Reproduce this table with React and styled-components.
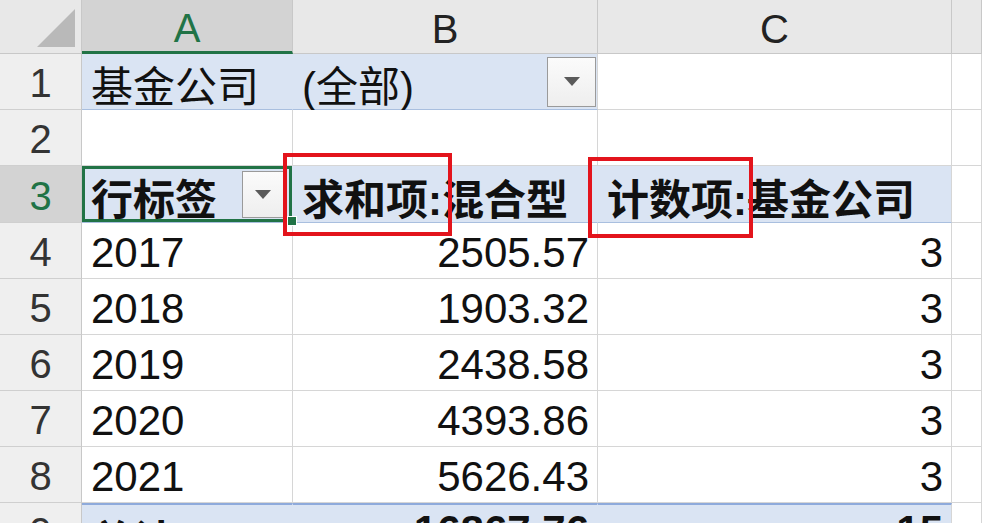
import React from "react";
import styled, { createGlobalStyle, css } from "styled-components";

const Global = createGlobalStyle`
  html, body { margin: 0; padding: 0; background: #fff; overflow: hidden; }
  body { width: 982px; height: 523px; }
`;

const FONT = `"Liberation Sans", "Noto Sans CJK SC", sans-serif`;
const BLUE = "#dae4f3";
const GRID = "#d6d6d6";
const GREEN = "#217346";

const Sheet = styled.div`
  position: relative;
  display: grid;
  grid-template-columns: 82px 211px 305px 354px 30px;
  grid-template-rows: 54px 56px 56px 57px 56px 56px 56px 56px 56px 56px;
  width: 982px;
  height: 523px;
  overflow: hidden;
  font-family: ${FONT};
`;

const Corner = styled.div`
  background: #e8e8e8;
  border-right: 1px solid #c8c8c8;
  border-bottom: 1px solid #c8c8c8;
  display: flex;
  align-items: flex-end;
  justify-content: flex-end;
  padding: 0 6px 6px 0;
  box-sizing: border-box;
`;

const ColHead = styled.div`
  background: ${(p) => (p.$active ? "#d3d3d3" : "#e8e8e8")};
  border-right: 1px solid #c8c8c8;
  border-bottom: ${(p) => (p.$active ? `3px solid ${GREEN}` : "1px solid #c8c8c8")};
  color: ${(p) => (p.$active ? GREEN : "#222")};
  font-size: 40px;
  display: flex;
  align-items: center;
  justify-content: center;
  padding-top: 6px;
  box-sizing: border-box;
`;

const RowHead = styled.div`
  background: ${(p) => (p.$active ? "#d3d3d3" : "#efefef")};
  border-right: 1px solid #c8c8c8;
  border-bottom: 1px solid #cfcfcf;
  color: ${(p) => (p.$active ? GREEN : "#333")};
  font-size: 40px;
  display: flex;
  align-items: center;
  justify-content: center;
  padding-top: 4px;
  box-sizing: border-box;
`;

const Cell = styled.div`
  position: relative;
  box-sizing: border-box;
  display: flex;
  align-items: center;
  justify-content: ${(p) => (p.$right ? "flex-end" : "flex-start")};
  padding: 4px ${(p) => (p.$right ? "8px" : "0")} 0 ${(p) => (p.$right ? "0" : "9px")};
  font-size: 42px;
  color: #111;
  white-space: nowrap;
  font-weight: ${(p) => (p.$bold ? 700 : 400)};
  background: ${(p) => (p.$fill ? BLUE : "#fff")};
  border-right: 1px solid ${(p) => (p.$fill && !p.$last ? BLUE : GRID)};
  border-bottom: 1px solid ${GRID};
  ${(p) =>
    p.$lineBottom &&
    css`
      border-bottom: 1px solid #a9bfdf;
    `}
  ${(p) =>
    p.$lineTop &&
    css`
      border-top: 2px solid #8eaadb;
      align-items: flex-start;
      padding-top: 2px;
    `}
  ${(p) =>
    p.$selected &&
    css`
      box-shadow: inset 0 0 0 3px ${GREEN};
    `}
`;

const Label = styled.span`
  flex: 1;
`;

const DropButton = styled.div`
  width: ${(p) => p.$w}px;
  height: ${(p) => p.$h}px;
  box-sizing: border-box;
  border: 1px solid #9a9a9a;
  background: linear-gradient(#fbfbfb, #eeeeee);
  display: flex;
  align-items: center;
  justify-content: center;
  margin-right: ${(p) => p.$mr}px;
  margin-top: ${(p) => p.$mt}px;
  flex: none;
`;

const Handle = styled.div`
  position: absolute;
  right: -5px;
  bottom: -4px;
  width: 8px;
  height: 8px;
  background: ${GREEN};
  border: 1px solid #fff;
  z-index: 3;
`;

const RedBox = styled.div`
  position: absolute;
  left: ${(p) => p.$x}px;
  top: ${(p) => p.$y}px;
  width: ${(p) => p.$w}px;
  height: ${(p) => p.$h}px;
  border: 4px solid #e3141c;
  box-sizing: border-box;
  z-index: 5;
  pointer-events: none;
`;

const Arrow = () => (
  <svg width="16" height="9" viewBox="0 0 16 9">
    <polygon points="0,0 16,0 8,9" fill="#5a5a5a" />
  </svg>
);

const CornerTri = () => (
  <svg width="38" height="38" viewBox="0 0 38 38">
    <polygon points="38,0 38,38 0,38" fill="#b9b9b9" />
  </svg>
);

const rows = [
  ["2017", "2505.57", "3"],
  ["2018", "1903.32", "3"],
  ["2019", "2438.58", "3"],
  ["2020", "4393.86", "3"],
  ["2021", "5626.43", "3"],
];

export default function App() {
  return (
    <>
      <Global />
      <Sheet>
        <Corner>
          <CornerTri />
        </Corner>
        <ColHead $active>A</ColHead>
        <ColHead>B</ColHead>
        <ColHead>C</ColHead>
        <ColHead />

        <RowHead>1</RowHead>
        <Cell $fill $lineBottom>基金公司</Cell>
        <Cell $fill $lineBottom $last>
          <Label>(全部)</Label>
          <DropButton $w={49} $h={50} $mr={1} $mt={-4}>
            <Arrow />
          </DropButton>
        </Cell>
        <Cell />
        <Cell />

        <RowHead>2</RowHead>
        <Cell />
        <Cell />
        <Cell />
        <Cell />

        <RowHead $active>3</RowHead>
        <Cell $fill $bold $lineBottom $selected>
          <Label>行标签</Label>
          <DropButton $w={42} $h={47} $mr={8} $mt={-4}>
            <Arrow />
          </DropButton>
          <Handle />
        </Cell>
        <Cell $fill $bold $lineBottom>求和项:混合型</Cell>
        <Cell $fill $bold $lineBottom $last>计数项:基金公司</Cell>
        <Cell />

        {rows.map((r, i) => (
          <React.Fragment key={r[0]}>
            <RowHead>{i + 4}</RowHead>
            <Cell>{r[0]}</Cell>
            <Cell $right>{r[1]}</Cell>
            <Cell $right>{r[2]}</Cell>
            <Cell />
          </React.Fragment>
        ))}

        <RowHead>9</RowHead>
        <Cell $fill $bold $lineTop>总计</Cell>
        <Cell $fill $bold $lineTop $right>16867.76</Cell>
        <Cell $fill $bold $lineTop $right $last>15</Cell>
        <Cell />

        <RedBox $x={283} $y={153} $w={169} $h={83} />
        <RedBox $x={588} $y={157} $w={165} $h={81} />
      </Sheet>
    </>
  );
}
